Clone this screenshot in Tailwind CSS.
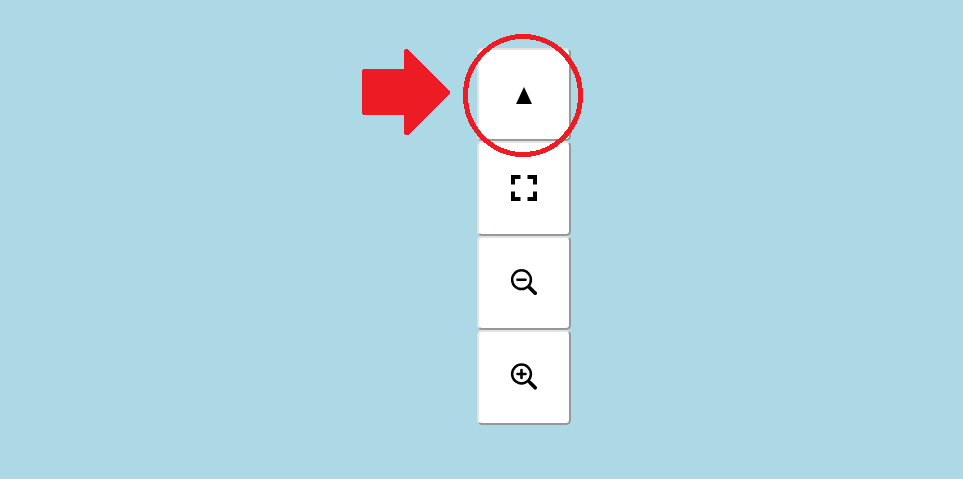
<!DOCTYPE html>
<html lang="en">
<head>
<meta charset="utf-8">
<title>Map controls</title>
<script src="https://cdn.jsdelivr.net/npm/@tailwindcss/browser@4"></script>
</head>
<body class="relative h-[479px] w-[963px] overflow-hidden bg-[#add8e6] font-['Liberation_Sans',sans-serif]">
<main class="flex flex-col pl-[477px] pt-12">
  <button aria-label="Collapse" class="flex h-[93px] w-[94px] items-center justify-center rounded-[5px] border-2 border-t-[#e3e3e3] border-l-[#e3e3e3] border-r-[#979797] border-b-[#979797] bg-white">
    <svg class="mt-px h-[17px] w-4" viewBox="0 0 16 17"><path d="M8 0 16 17H0Z"/></svg>
  </button>
  <button aria-label="Fullscreen" class="flex h-[95px] w-[94px] items-center justify-center rounded-[5px] border-2 border-t-[#e3e3e3] border-l-[#e3e3e3] border-r-[#979797] border-b-[#979797] bg-white">
    <svg class="mb-[1px] h-[26px] w-[26px]" viewBox="0 0 26 26" fill="none" stroke="#000" stroke-width="4"><path d="M2 9.500V2H9.500M16.500 2H24V9.500M24 16.500V24H16.500M9.500 24H2V16.500"/></svg>
  </button>
  <button aria-label="Zoom out" class="flex h-[94px] w-[94px] items-center justify-center rounded-[5px] border-2 border-t-[#e3e3e3] border-l-[#e3e3e3] border-r-[#979797] border-b-[#979797] bg-white">
    <svg class="h-[26px] w-[26px] -translate-y-px" viewBox="0 0 26 26" fill="none" stroke="#000"><circle cx="10.500" cy="10.700" r="9.400" stroke-width="2.500"/><path d="M6.500 10.700H14.500" stroke-width="2.600" stroke-linecap="round"/><path d="M17 17 19 19" stroke-width="3"/><path d="M19.200 19.200 24.200 24.200" stroke-width="3.700" stroke-linecap="round"/></svg>
  </button>
  <button aria-label="Zoom in" class="flex h-[95px] w-[94px] items-center justify-center rounded-[5px] border-2 border-t-[#e3e3e3] border-l-[#e3e3e3] border-r-[#979797] border-b-[#979797] bg-white">
    <svg class="mb-[3px] h-[26px] w-[26px] overflow-visible" viewBox="0 0 26 26" fill="none" stroke="#000"><circle cx="10.500" cy="11" r="9.400" stroke-width="2.500"/><path d="M6.500 11H14.500M10.500 7V15" stroke-width="2.600" stroke-linecap="round"/><path d="M17 17.500 19 19.500" stroke-width="3"/><path d="M19.200 19.700 24.200 24.700" stroke-width="3.700" stroke-linecap="round"/></svg>
  </button>
</main>
<svg class="pointer-events-none absolute inset-0" width="963" height="479" shape-rendering="crispEdges">
  <path fill="#ed1c24" d="M363 69H404V50L405 49H408L450 92V93L408 135H405L404 134V115H363L362 114V70Z"/>
  <ellipse cx="523" cy="95.500" rx="57.500" ry="59" fill="none" stroke="#ed1c24" stroke-width="5"/>
</svg>
</body>
</html>
